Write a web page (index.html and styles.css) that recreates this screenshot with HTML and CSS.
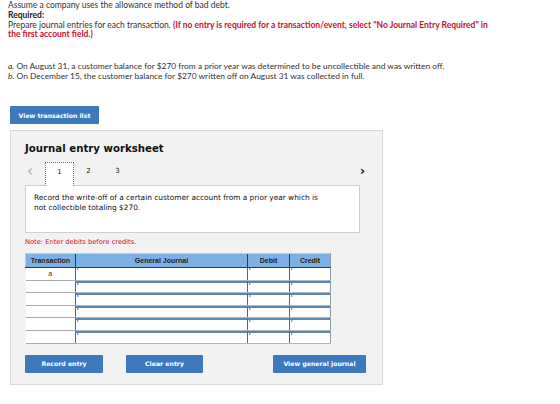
FILE: index.html
```html
<!DOCTYPE html>
<html>
<head>
<meta charset="utf-8">
<link rel="stylesheet" href="styles.css">
</head>
<body>
<div class="intro">
  <p>Assume a company uses the allowance method of bad debt.</p>
  <p class="req">Required:</p>
  <p>Prepare journal entries for each transaction. <span class="red">(If no entry is required for a transaction/event, select "No Journal Entry Required" in<br>the first account field.)</span></p>
</div>
<div class="items">
  <p><i>a.</i> On August 31, a customer balance for $270 from a prior year was determined to be uncollectible and was written off.</p>
  <p><i>b.</i> On December 15, the customer balance for $270 written off on August 31 was collected in full.</p>
</div>
<button class="btn btn-list">View transaction list</button>
<section class="panel">
  <h2 class="title">Journal entry worksheet</h2>
  <div class="tabs">
    <span class="arrow prev">&lsaquo;</span>
    <span class="tab active">1</span>
    <span class="tab">2</span>
    <span class="tab">3</span>
    <span class="arrow next">&rsaquo;</span>
  </div>
  <div class="desc">
    <p>Record the write-off of a certain customer account from a prior year which is not collectible totaling $270.</p>
  </div>
  <p class="note">Note: Enter debits before credits.</p>
  <table class="journal">
    <thead>
      <tr><th class="c-tr">Transaction</th><th class="c-gj">General Journal</th><th class="c-dr">Debit</th><th class="c-cr">Credit</th></tr>
    </thead>
    <tbody>
      <tr><td class="tr">a</td><td class="in"><div class="field"></div></td><td class="in"><div class="field"></div></td><td class="in"><div class="field"></div></td></tr>
      <tr><td class="tr"></td><td class="in"><div class="field"></div></td><td class="in"><div class="field"></div></td><td class="in"><div class="field"></div></td></tr>
      <tr><td class="tr"></td><td class="in"><div class="field"></div></td><td class="in"><div class="field"></div></td><td class="in"><div class="field"></div></td></tr>
      <tr><td class="tr"></td><td class="in"><div class="field"></div></td><td class="in"><div class="field"></div></td><td class="in"><div class="field"></div></td></tr>
      <tr><td class="tr"></td><td class="in"><div class="field"></div></td><td class="in"><div class="field"></div></td><td class="in"><div class="field"></div></td></tr>
      <tr><td class="tr"></td><td class="in"><div class="field"></div></td><td class="in"><div class="field"></div></td><td class="in"><div class="field"></div></td></tr>
    </tbody>
  </table>
  <div class="actions">
    <button class="btn btn-rec">Record entry</button>
    <button class="btn btn-clr">Clear entry</button>
    <button class="btn btn-gen">View general journal</button>
  </div>
</section>
</body>
</html>
```

FILE: styles.css
```css
* { box-sizing: border-box; }
body {
  margin: 0;
  padding: 1px 0 0 8px;
  background: #fff;
  font-family: Lato, "Liberation Sans", sans-serif;
  color: #333;
}
p { margin: 0; }
.intro {
  width: 520px;
  font-size: 8.5px;
  line-height: 9.8px;
}
.req { font-weight: bold; color: #222; }
.red { color: #c8102e; font-weight: bold; }
.items {
  margin-top: 22px;
  font-size: 8.4px;
  line-height: 9.4px;
}
.btn {
  display: flex;
  align-items: center;
  justify-content: center;
  border: 0;
  border-radius: 1px;
  background: #3d79bc;
  color: #fff;
  font-family: "DejaVu Sans", Verdana, sans-serif;
  font-weight: bold;
  font-size: 6.2px;
  padding: 0;
  cursor: pointer;
}
.btn-list {
  margin: 25px 0 0 2px;
  width: 89px;
  height: 18px;
}
.panel {
  margin: 6px 0 0 2px;
  width: 373px;
  height: 255px;
  background: #f2f2f2;
  border: 1px solid #d9d9d9;
  padding: 10px 0 0 14px;
  font-family: "DejaVu Sans", Verdana, sans-serif;
}
.title {
  margin: 0;
  font-size: 10.2px;
  line-height: 15px;
  color: #111;
}
.tabs {
  position: relative;
  display: flex;
  align-items: stretch;
  height: 24px;
  margin-top: 6px;
  font-size: 7px;
  color: #222;
}
.arrow {
  display: flex;
  align-items: center;
  font-family: "DejaVu Sans", sans-serif;
}
.prev { color: #aaa; width: 20px; padding-left: 2px; height: 17px; font-size: 15px; }
.next { position: absolute; right: 17px; top: 0; height: 17px; color: #222; font-weight: bold; font-size: 13px; }
.tab {
  width: 29px;
  display: flex;
  justify-content: center;
  padding-top: 5px;
  height: 17px;
}
.tab.active {
  height: 24px;
  background: #fff;
  border: 1px dotted #4a78b8;
  border-bottom: 0;
  position: relative;
  z-index: 1;
}
.desc {
  margin-top: -1px;
  width: 335px;
  height: 48px;
  background: #fff;
  border: 1px solid #cfcfcf;
  padding: 7px 8px 0 8px;
  font-size: 7.4px;
  line-height: 10px;
  color: #111;
}
.desc p { width: 290px; }
.note {
  margin-top: 5px;
  font-size: 6.7px;
  line-height: 8px;
  color: #c8102e;
}
.journal {
  margin-top: 7px;
  border-collapse: collapse;
  table-layout: fixed;
  width: 305px;
  font-family: "Liberation Sans", Arial, sans-serif;
}
.journal th {
  height: 14px;
  background: #7db0e4;
  color: #222;
  font-size: 7px;
  font-weight: bold;
  padding: 0;
  border-top: 1px solid #b8cde3;
  border-bottom: 1px solid #2e3b4a;
  border-left: 1px solid #2e3b4a;
}
.journal th.c-tr { border-left: 1px solid #b8cde3; }
.journal th.c-cr { border-right: 1px solid #8d9cb0; }
.c-tr { width: 50px; }
.c-gj { width: 172px; }
.c-dr { width: 42px; }
.c-cr { width: 41px; }
.journal td {
  height: 12.6px;
  padding: 0;
}
.journal td.tr {
  background: #fff;
  text-align: center;
  font-size: 7px;
  color: #333;
  border-bottom: 1px solid #aaa;
}
.journal td.in {
  border-left: 1px solid #55657a;
  border-bottom: 1px solid #aab7c7;
  background: #fff;
  vertical-align: top;
}
.journal tr td.in:last-child { border-right: 1px solid #8d9cb0; }
.field {
  position: relative;
  height: 11.6px;
  border-top: 2px solid #5f86b3;
  background: #fff;
}
.journal tbody tr:first-child .field { border-top: 0; }
.field::before {
  content: "";
  position: absolute;
  left: 1px;
  top: 0;
  border-left: 2px solid #3a7fe0;
  border-top: 1px solid transparent;
  border-bottom: 1px solid transparent;
}
.actions {
  display: flex;
  width: 341px;
  margin-top: 11px;
}
.actions .btn { height: 18px; }
.btn-rec { width: 78px; }
.btn-clr { width: 77px; margin-left: 23px; }
.btn-gen { width: 93px; margin-left: auto; }
```
